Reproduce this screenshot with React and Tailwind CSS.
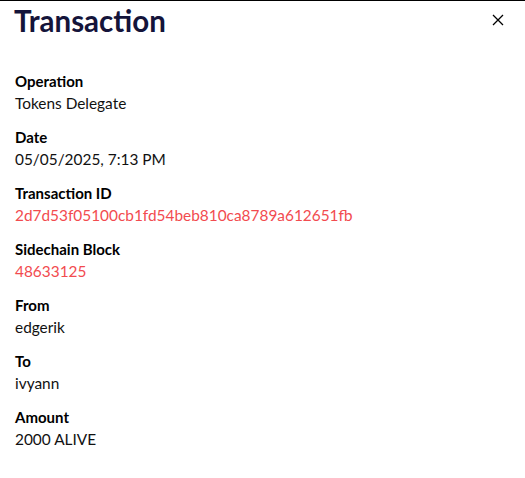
import React from "react";

const rows = [
  { label: "Operation", value: "Tokens Delegate" },
  { label: "Date", value: "05/05/2025, 7:13 PM" },
  { label: "Transaction ID", value: "2d7d53f05100cb1fd54beb810ca8789a612651fb", red: true },
  { label: "Sidechain Block", value: "48633125", red: true },
  { label: "From", value: "edgerik" },
  { label: "To", value: "ivyann" },
  { label: "Amount", value: "2000 ALIVE" },
];

export default function App() {
  return (
    <div
      className="w-[525px] h-[478px] bg-white border-t border-black overflow-hidden"
      style={{ fontFamily: "Lato, 'Noto Sans', sans-serif" }}
    >
      <div className="flex items-start justify-between pl-[14px] pr-[21px]">
        <h1 className="text-[29.5px] font-bold leading-[40px] text-[#14143a]">Transaction</h1>
        <button className="mt-[13px] w-[12px] h-[12px] flex items-center justify-center text-black">
          <svg width="12" height="12" viewBox="0 0 12 12" fill="none" stroke="currentColor" strokeWidth="1.3">
            <path d="M1 1L11 11M11 1L1 11" />
          </svg>
        </button>
      </div>
      <div className="flex flex-col gap-[11px] px-[15px] mt-[29px]">
        {rows.map((r) => (
          <div key={r.label} className="flex flex-col">
            <div className="text-[15px] font-bold leading-[22px] text-black">{r.label}</div>
            <div className={`text-[15.4px] leading-[23px] ${r.red ? "text-[#f24b4f]" : "text-[#111]"}`}>{r.value}</div>
          </div>
        ))}
      </div>
    </div>
  );
}
